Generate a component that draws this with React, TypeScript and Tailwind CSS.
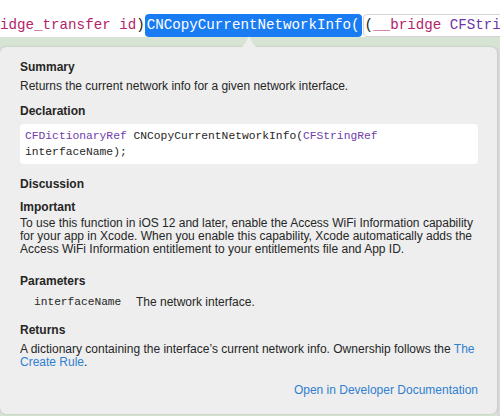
import React from "react";

const sans = "font-['Liberation_Sans',Arial,sans-serif]";
const mono = "font-['Liberation_Mono','DejaVu_Sans_Mono',monospace]";

function Heading({ children, className = "" }: { children: React.ReactNode; className?: string }) {
  return (
    <div className={`text-[12px] leading-[15px] font-bold text-[#262626] ${className}`}>{children}</div>
  );
}

function Arrow() {
  return (
    <svg
      className="absolute left-[237px] top-[-11px]"
      width="24"
      height="12"
      viewBox="0 0 24 12"
    >
      <path d="M0 12 C6 12 8.5 8 10.6 2.2 Q12 -0.6 13.4 2.2 C15.5 8 18 12 24 12 Z" fill="#eeeeee" />
    </svg>
  );
}

export default function App() {
  return (
    <div className={`w-[500px] h-[416px] overflow-hidden bg-white ${sans}`}>
      {/* editor line */}
      <div className={`h-[37px] pt-[14px] flex whitespace-nowrap text-[14.2px] leading-[23px] ${mono}`}>
        <span className="text-[#b3246a]">idge_transfer id</span>
        <span className="text-[#1d1d1d]">)</span>
        <span className="bg-[#1a7cf3] text-white rounded-[4px] px-[2px]">CNCopyCurrentNetworkInfo(</span>
        <span className="ml-[1px] border border-[#d4d4d4] rounded-l-[4px] px-[1px] leading-[21px]">
          <span className="text-[#1d1d1d]">(</span>
          <span className="text-[#b3246a]">__bridge </span>
          <span className="text-[#6c36a9]">CFStri</span>
        </span>
      </div>

      {/* popover area */}
      <div className="h-[379px] bg-[#d7e4d4] pt-[10px] flex">
        <div className="relative w-[497px] h-[367px] bg-[#eeeeee] rounded-[6px] shadow-[0_0_2px_rgba(0,0,0,0.22)] pl-[20px] pr-[19px] pt-[12.5px] text-[#262626]">
          <Arrow />
          <Heading>Summary</Heading>
          <div className="mt-[4px] text-[12px] leading-[15px]">
            Returns the current network info for a given network interface.
          </div>

          <Heading className="mt-[10px]">Declaration</Heading>
          <div className={`mt-[5.5px] bg-white rounded-[4px] pl-[5px] py-[3.5px] text-[11.3px] leading-[16.5px] ${mono}`}>
            <span className="text-[#703daa]">CFDictionaryRef</span> CNCopyCurrentNetworkInfo(
            <span className="text-[#703daa]">CFStringRef</span>
            <br />
            interfaceName);
          </div>

          <Heading className="mt-[12.5px]">Discussion</Heading>
          <Heading className="mt-[8px]">Important</Heading>
          <div className="mt-[2px] text-[12px] leading-[13px] whitespace-nowrap">
            To use this function in iOS 12 and later, enable the Access WiFi Information capability
            <br />
            for your app in Xcode. When you enable this capability, Xcode automatically adds the
            <br />
            Access WiFi Information entitlement to your entitlements file and App ID.
          </div>

          <Heading className="mt-[18px]">Parameters</Heading>
          <div className="mt-[6px] flex items-center text-[12px] leading-[15px]">
            <span className={`ml-[14px] w-[102px] text-[11.2px] ${mono}`}>interfaceName</span>
            <span>The network interface.</span>
          </div>

          <Heading className="mt-[13px]">Returns</Heading>
          <div className="mt-[5px] text-[12px] leading-[13px] whitespace-nowrap">
            A dictionary containing the interface’s current network info. Ownership follows the{" "}
            <span className="text-[#2f80d1]">The</span>
            <br />
            <span className="text-[#2f80d1]">Create Rule</span>.
          </div>

          <div className="mt-[14px] flex justify-end pr-[-1px] text-[12px] leading-[15px] text-[#2f80d1]">
            Open in Developer Documentation
          </div>
        </div>
        <div className="flex-1 bg-[#d9d9d9]" />
      </div>
    </div>
  );
}
